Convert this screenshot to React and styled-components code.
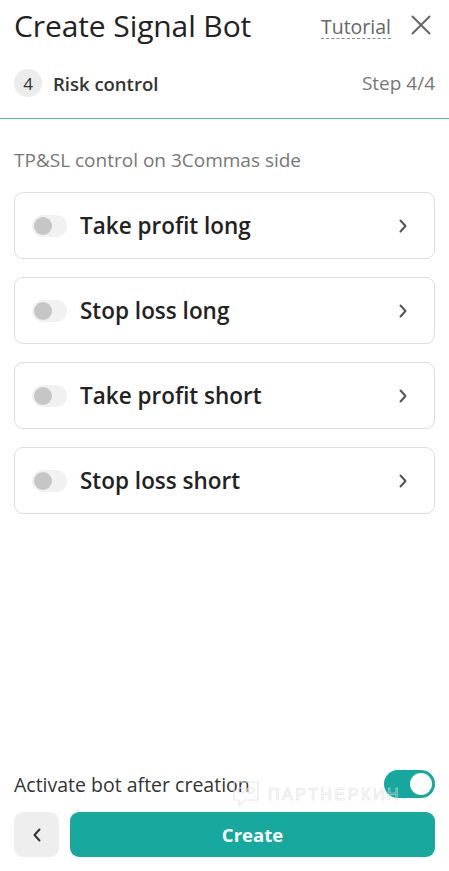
import React, { useState } from 'react'
import styled, { createGlobalStyle } from 'styled-components'

const GlobalStyle = createGlobalStyle`
  html, body {
    margin: 0;
    padding: 0;
    background: #ffffff;
  }
  * {
    box-sizing: border-box;
  }
  body {
    font-family: 'Open Sans', 'Noto Sans', sans-serif;
    color: #222;
  }
`

const Page = styled.div`
  position: relative;
  width: 449px;
  height: 871px;
  display: flex;
  flex-direction: column;
  background: #fff;
  overflow: hidden;
`

const Header = styled.div`
  padding: 0 14px;
  border-bottom: 1.5px solid #5cb8b4;
`

const TitleRow = styled.div`
  display: flex;
  align-items: center;
  height: 50px;
`

const Title = styled.h1`
  margin: 0;
  flex: 1;
  font-size: 30px;
  font-weight: 500;
  color: #222;
  letter-spacing: -0.1px;
`

const TutorialLink = styled.a`
  font-size: 19.5px;
  font-weight: 500;
  color: #666;
  text-decoration: none;
  border-bottom: 1.5px dashed #888;
  line-height: 22px;
  margin-top: 4px;
  margin-right: 20px;
  cursor: pointer;
`

const CloseButton = styled.button`
  border: none;
  background: none;
  padding: 0;
  width: 20px;
  height: 20px;
  display: flex;
  align-items: center;
  justify-content: center;
  margin-right: 4px;
  cursor: pointer;
`

const StepRow = styled.div`
  display: flex;
  align-items: center;
  height: 66px;
  margin-bottom: 2px;
`

const StepBadge = styled.span`
  width: 28px;
  height: 28px;
  border-radius: 50%;
  background: #ececec;
  display: flex;
  align-items: center;
  justify-content: center;
  font-size: 17px;
  color: #333;
  margin-right: 11px;
`

const StepName = styled.span`
  flex: 1;
  font-size: 18.5px;
  font-weight: 600;
  color: #333;
`

const StepCount = styled.span`
  font-size: 19px;
  color: #777;
`

const Body = styled.div`
  flex: 1;
  padding: 29px 14px 0;
  display: flex;
  flex-direction: column;
`

const Caption = styled.div`
  font-size: 19px;
  line-height: 25px;
  color: #777;
  margin-bottom: 19px;
`

const CardList = styled.div`
  display: flex;
  flex-direction: column;
  gap: 18px;
`

const Card = styled.div`
  height: 67px;
  border: 1px solid #dedede;
  border-radius: 9px;
  display: flex;
  align-items: center;
  padding: 0 26px 0 17px;
  cursor: pointer;
`

const Toggle = styled.span`
  width: ${(p) => (p.$big ? '51px' : '35px')};
  height: ${(p) => (p.$big ? '28px' : '22px')};
  border-radius: 14px;
  background: ${(p) => (p.$on ? '#16a79d' : '#f1f1f1')};
  display: flex;
  align-items: center;
  justify-content: ${(p) => (p.$on ? 'flex-end' : 'flex-start')};
  padding: ${(p) => (p.$big ? '3px' : '2px')};
  flex-shrink: 0;
  cursor: pointer;
`

const Knob = styled.span`
  width: ${(p) => (p.$big ? '22px' : '18px')};
  height: ${(p) => (p.$big ? '22px' : '18px')};
  border-radius: 50%;
  background: ${(p) => (p.$on ? '#fff' : '#c6c6c6')};
`

const CardLabel = styled.span`
  flex: 1;
  margin-left: 13px;
  font-size: 22.5px;
  font-weight: 600;
  color: #222;
`

const Footer = styled.div`
  padding: 0 14px 14px;
  display: flex;
  flex-direction: column;
  gap: 14px;
`

const ActivateRow = styled.div`
  display: flex;
  align-items: center;
  justify-content: space-between;
`

const ActivateLabel = styled.span`
  font-size: 19.5px;
  font-weight: 500;
  color: #333;
  margin-top: 2px;
`

const ButtonRow = styled.div`
  display: flex;
  gap: 11px;
`

const BackButton = styled.button`
  width: 45px;
  height: 45px;
  border: none;
  border-radius: 9px;
  background: #eeeeee;
  display: flex;
  align-items: center;
  justify-content: center;
  cursor: pointer;
`

const CreateButton = styled.button`
  flex: 1;
  height: 45px;
  border: none;
  border-radius: 9px;
  background: #17a89e;
  color: #fff;
  font-family: 'Open Sans', 'Noto Sans', sans-serif;
  font-size: 18.5px;
  font-weight: 700;
  cursor: pointer;
`

// faint watermark lying over the footer in the screenshot
const Watermark = styled.div`
  position: absolute;
  left: 232px;
  top: 780px;
  display: flex;
  align-items: center;
  gap: 8px;
  pointer-events: none;
`

const WatermarkText = styled.span`
  font-family: 'Liberation Sans', Arial, sans-serif;
  font-size: 16px;
  font-weight: 400;
  letter-spacing: 2.6px;
  color: rgba(255, 255, 255, 0);
  -webkit-text-stroke: 0.5px #dcdcdc;
  margin-top: 2px;
`

const Chevron = ({ dir = 'right', color = '#555' }) => (
  <svg width="10" height="16" viewBox="0 0 10 16" fill="none">
    <path
      d={dir === 'right' ? 'M2.5 2.5 L7.5 8 L2.5 13.5' : 'M7.5 2.5 L2.5 8 L7.5 13.5'}
      stroke={color}
      strokeWidth="2"
      strokeLinecap="round"
      strokeLinejoin="round"
    />
  </svg>
)

const items = ['Take profit long', 'Stop loss long', 'Take profit short', 'Stop loss short']

export default function App() {
  const [active, setActive] = useState(true)

  return (
    <Page>
      <GlobalStyle />
      <Header>
        <TitleRow>
          <Title>Create Signal Bot</Title>
          <TutorialLink>Tutorial</TutorialLink>
          <CloseButton aria-label="Close">
            <svg width="20" height="20" viewBox="0 0 20 20">
              <path d="M1.5 1.5 L18.5 18.5 M18.5 1.5 L1.5 18.5" stroke="#666" strokeWidth="2" strokeLinecap="round" />
            </svg>
          </CloseButton>
        </TitleRow>
        <StepRow>
          <StepBadge>4</StepBadge>
          <StepName>Risk control</StepName>
          <StepCount>Step 4/4</StepCount>
        </StepRow>
      </Header>

      <Body>
        <Caption>TP&amp;SL control on 3Commas side</Caption>
        <CardList>
          {items.map((label) => (
            <Card key={label}>
              <Toggle>
                <Knob />
              </Toggle>
              <CardLabel>{label}</CardLabel>
              <Chevron />
            </Card>
          ))}
        </CardList>
      </Body>

      <Footer>
        <ActivateRow>
          <ActivateLabel>Activate bot after creation</ActivateLabel>
          <Toggle $big $on={active} onClick={() => setActive(!active)}>
            <Knob $big $on={active} />
          </Toggle>
        </ActivateRow>
        <ButtonRow>
          <BackButton aria-label="Back">
            <Chevron dir="left" color="#333" />
          </BackButton>
          <CreateButton>Create</CreateButton>
        </ButtonRow>
      </Footer>

      <Watermark>
        <svg width="28" height="28" viewBox="0 0 28 28" fill="none" stroke="#e4e4e4" strokeWidth="1">
          <path d="M2 2 H26 V20 H12 L7 26 V20 H2 Z" />
          <rect x="6" y="8" width="7" height="5" rx="2" />
          <rect x="15" y="8" width="7" height="5" rx="2" />
          <path d="M13 10.5 H15" />
        </svg>
        <WatermarkText>ПАРТНЕРКИН</WatermarkText>
      </Watermark>
    </Page>
  )
}
